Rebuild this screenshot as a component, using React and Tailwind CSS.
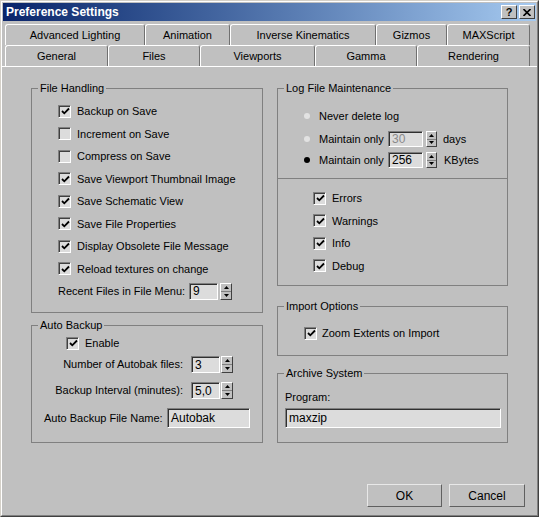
import React from 'react';

const row1 = [
  ['Advanced Lighting', 'w-[140px]'],
  ['Animation', 'w-[85px]'],
  ['Inverse Kinematics', 'w-[146px]'],
  ['Gizmos', 'w-[71px]'],
  ['MAXScript', 'w-[83px]'],
];

const row2 = [
  ['General', 'w-[103px]'],
  ['Files', 'w-[92px]'],
  ['Viewports', 'w-[115px]'],
  ['Gamma', 'w-[102px]'],
  ['Rendering', 'w-[113px]'],
];

const fileHandling = [
  ['Backup on Save', true],
  ['Increment on Save', false],
  ['Compress on Save', false],
  ['Save Viewport Thumbnail Image', true],
  ['Save Schematic View', true],
  ['Save File Properties', true],
  ['Display Obsolete File Message', true],
  ['Reload textures on change', true],
];

const Tab = ({ label, width }) => (
  <div
    className={`${width} h-full flex items-center justify-center border-t border-l border-white border-r border-r-[#707070] rounded-t-[3px] text-[11px]`}
  >
    {label}
  </div>
);

const Check = ({ checked }) => (
  <span className="w-[13px] h-[13px] shrink-0 border border-t-[#808080] border-l-[#808080] border-r-white border-b-white bg-[#dcdcdc] shadow-[inset_1px_1px_0_#404040] flex items-center justify-center">
    {checked && (
      <svg width="9" height="9" viewBox="0 0 9 9" className="ml-[1px] mt-[1px]">
        <polyline points="1,4 3.3,6.3 8,1.5" fill="none" stroke="#000" strokeWidth="1.8" />
      </svg>
    )}
  </span>
);

const CheckRow = ({ label, checked = true }) => (
  <div className="h-[22.5px] flex items-center gap-[6px]">
    <Check checked={checked} />
    <span>{label}</span>
  </div>
);

const Field = ({ value, className, disabled }) => (
  <span
    className={`${className} border border-t-[#808080] border-l-[#808080] border-r-white border-b-white bg-[#dcdcdc] shadow-[inset_1px_1px_0_#303030] flex items-center pl-[3px] text-[12px] ${disabled ? 'text-[#8a8a8a]' : 'text-black'}`}
  >
    {value}
  </span>
);

const Arrow = ({ up }) => (
  <svg width="5" height="3" viewBox="0 0 5 3">
    <polygon points={up ? '0,3 5,3 2.5,0' : '0,0 5,0 2.5,3'} fill="#000" />
  </svg>
);

const Spinner = ({ className }) => (
  <span className={`${className} flex flex-col border border-t-white border-l-white border-r-[#404040] border-b-[#404040] bg-[#c0c0c0]`}>
    <span className="flex-1 flex items-center justify-center border-b border-[#808080]">
      <Arrow up />
    </span>
    <span className="flex-1 flex items-center justify-center">
      <Arrow />
    </span>
  </span>
);

const Group = ({ label, className, children }) => (
  <div className={`border border-[#808080] ${className}`}>
    <div className="-mt-[7px] ml-[6px] px-[2px] h-[13px] leading-[13px] bg-[#c0c0c0] w-fit">{label}</div>
    {children}
  </div>
);

const Radio = ({ on }) => (
  <span className={`w-[6px] h-[6px] rounded-full shrink-0 ${on ? 'bg-black' : 'bg-[#e2e2e2]'}`} />
);

const Button = ({ label, className }) => (
  <button className={`${className} h-[23px] border border-t-[#e8e8e8] border-l-[#e8e8e8] border-r-[#606060] border-b-[#606060] bg-[#c0c0c0] text-[12px]`}>
    {label}
  </button>
);

export default function App() {
  return (
    <div className="w-[539px] h-[517px] bg-[#c0c0c0] border border-t-[#d4d0c8] border-l-[#d4d0c8] border-r-[#404040] border-b-[#404040] font-['Liberation_Sans',Arial,sans-serif] text-[11px] text-black">
      <div className="h-full border border-t-white border-l-white border-r-[#808080] border-b-[#808080] flex flex-col">
        {/* Title bar */}
        <div className="mx-[1px] mt-[1px] h-[18px] bg-gradient-to-r from-[#0a246a] to-[#a6caf0] flex items-center pl-[3px] pr-[1px]">
          <span className="text-white font-bold text-[12px]">Preference Settings</span>
          <div className="ml-auto flex gap-[2px]">
            <span className="w-[16px] h-[14px] bg-[#c0c0c0] border border-t-white border-l-white border-r-[#404040] border-b-[#404040] flex items-center justify-center font-bold text-[11px] leading-none">
              ?
            </span>
            <span className="w-[16px] h-[14px] bg-[#c0c0c0] border border-t-white border-l-white border-r-[#404040] border-b-[#404040] flex items-center justify-center">
              <svg width="8" height="7" viewBox="0 0 8 7">
                <path d="M0.5 0 L7.5 7 M7.5 0 L0.5 7" stroke="#000" strokeWidth="1.6" />
              </svg>
            </span>
          </div>
        </div>

        {/* Tabs */}
        <div className="mt-[3px] ml-[3px] h-[21px] flex">
          {row1.map(([l, w]) => (
            <Tab key={l} label={l} width={w} />
          ))}
        </div>
        <div className="ml-[3px] h-[21px] flex">
          {row2.map(([l, w]) => (
            <Tab key={l} label={l} width={w} />
          ))}
        </div>

        {/* Panel */}
        <div className="flex-1 border-t border-white flex flex-col">
          <div className="pt-[21px] pl-[29px] flex gap-[14px]">
            {/* Left column */}
            <div className="w-[232px] flex flex-col">
              <Group label="File Handling" className="h-[225px]">
                <div className="pl-[26px] pt-[5px]">
                  {fileHandling.map(([l, c]) => (
                    <CheckRow key={l} label={l} checked={c} />
                  ))}
                  <div className="h-[22.5px] flex items-center">
                    <span className="w-[131px]">Recent Files in File Menu:</span>
                    <Field value="9" className="w-[29px] h-[17px]" />
                    <Spinner className="ml-[2px] w-[12px] h-[17px]" />
                  </div>
                </div>
              </Group>

              <Group label="Auto Backup" className="mt-[12px] h-[118px]">
                <div className="pl-[34px] mt-[4px] h-[14px] flex items-center gap-[6px]">
                  <Check checked />
                  <span>Enable</span>
                </div>
                <div className="mt-[6px] h-[17px] flex items-center">
                  <span className="w-[151px] text-right">Number of Autobak files:</span>
                  <Field value="3" className="ml-[8px] w-[29px] h-[17px]" />
                  <Spinner className="ml-[1px] w-[12px] h-[17px]" />
                </div>
                <div className="mt-[9px] h-[17px] flex items-center">
                  <span className="w-[151px] text-right">Backup Interval (minutes):</span>
                  <Field value="5,0" className="ml-[8px] w-[29px] h-[17px]" />
                  <Spinner className="ml-[1px] w-[12px] h-[17px]" />
                </div>
                <div className="mt-[9px] h-[20px] flex items-center pl-[12px]">
                  <span className="w-[123px]">Auto Backup File Name:</span>
                  <Field value="Autobak" className="w-[83px] h-[20px]" />
                </div>
              </Group>
            </div>

            {/* Right column */}
            <div className="w-[231px] flex flex-col">
              <Group label="Log File Maintenance" className="h-[198px]">
                <div className="pl-[26px] mt-[13px] h-[16px] flex items-center">
                  <Radio />
                  <span className="ml-[9px]">Never delete log</span>
                </div>
                <div className="pl-[26px] mt-[7px] h-[16px] flex items-center">
                  <Radio />
                  <span className="ml-[9px] w-[69px]">Maintain only</span>
                  <Field value="30" disabled className="w-[35px] h-[16px]" />
                  <Spinner className="ml-[3px] w-[11px] h-[16px]" />
                  <span className="ml-[6px]">days</span>
                </div>
                <div className="pl-[26px] mt-[5px] h-[16px] flex items-center">
                  <Radio on />
                  <span className="ml-[9px] w-[69px]">Maintain only</span>
                  <Field value="256" className="w-[35px] h-[16px]" />
                  <Spinner className="ml-[3px] w-[11px] h-[16px]" />
                  <span className="ml-[7px]">KBytes</span>
                </div>
                <div className="mt-[10px] border-t border-[#808080] pt-[8px] pl-[35px]">
                  <CheckRow label="Errors" />
                  <CheckRow label="Warnings" />
                  <CheckRow label="Info" />
                  <CheckRow label="Debug" />
                </div>
              </Group>

              <Group label="Import Options" className="mt-[20px] h-[50px]">
                <div className="pl-[26px] mt-[9px] h-[22px] flex items-center gap-[5px]">
                  <Check checked />
                  <span>Zoom Extents on Import</span>
                </div>
              </Group>

              <Group label="Archive System" className="mt-[17px] h-[70px]">
                <div className="pl-[7px] mt-[10px] h-[14px] flex items-center">Program:</div>
                <Field value="maxzip" className="ml-[7px] mt-[4px] w-[216px] h-[20px]" />
              </Group>
            </div>
          </div>

          <div className="mt-[41px] pr-[12px] flex justify-end gap-[7px]">
            <Button label="OK" className="w-[75px]" />
            <Button label="Cancel" className="w-[76px]" />
          </div>
        </div>
      </div>
    </div>
  );
}
